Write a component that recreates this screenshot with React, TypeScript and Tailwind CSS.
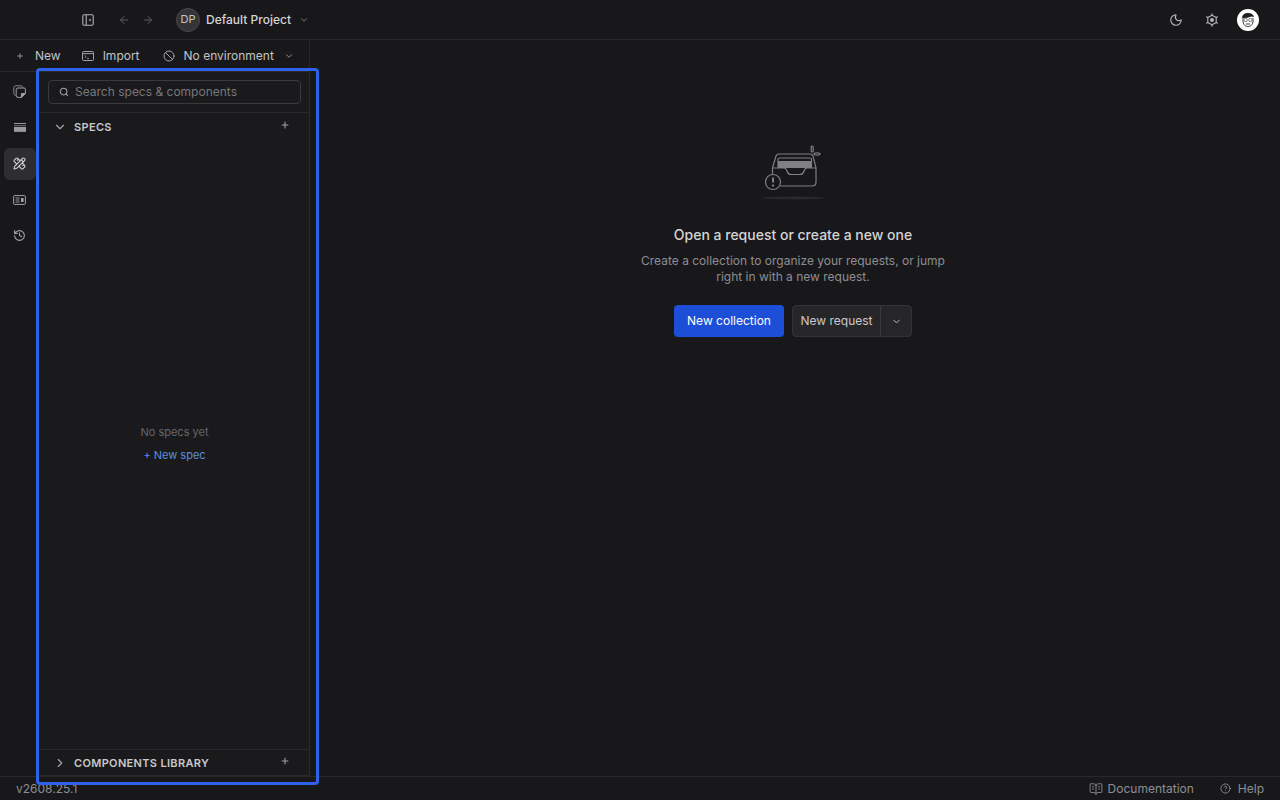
import { ChevronDown, ChevronRight, ArrowLeft, ArrowRight, Plus, Search, Moon, Ban, History, CircleHelp, BookOpenText, PencilRuler } from "lucide-react";

function RailItem({ active, children }: { active?: boolean; children: React.ReactNode }) {
  return (
    <div className={`flex h-8 w-8 items-center justify-center rounded-md text-[#a3a3a3] ${active ? "bg-[#2e2e30] text-[#d4d4d4]" : ""}`}>
      <div className="-ml-px -mt-px flex">{children}</div>
    </div>
  );
}

function SectionHead({ label, open }: { label: string; open?: boolean }) {
  return (
    <div className={`flex items-center pl-[13px] pr-[19px] ${open ? "mt-px h-[27px]" : "h-[25px] pt-px"}`}>
      {open ? <ChevronDown size={14} className="-mt-[2px] text-[#a3a3a3]" /> : <ChevronRight size={14} className="text-[#a3a3a3]" />}
      <span className="ml-[7px] flex-1 text-[11px] font-semibold tracking-[0.03em] text-[#c9c9c9]">{label}</span>
      <Plus size={10} strokeWidth={2.5} className={`text-[#a3a3a3] ${open ? "-mt-[6px]" : "-mt-1"}`} />
    </div>
  );
}

function FilesIcon() {
  return (
    <svg width="13" height="13" viewBox="0 0 13 13" fill="none" stroke="currentColor" strokeWidth="1">
      <path d="M2.6 10.5 Q0.8 10 0.8 8.4 V2.8 Q0.8 0.8 2.8 0.8 H8 Q9.6 0.8 10 2.4" stroke="#858589" />
      <path d="M12.4 8.4 V4.4 Q12.4 3 11 3 H5 Q3.2 3 3.2 4.8 V10.4 Q3.2 12.4 5 12.4 H8.4 Z" />
      <path d="M8.4 12.4 V8.6 H12.4 Z" fill="currentColor" />
    </svg>
  );
}

function StackIcon() {
  return (
    <svg width="12" height="9" viewBox="0 0 12 9">
      <rect x="0" y="0" width="12" height="1" fill="#9a9a9e" />
      <rect x="0" y="2.2" width="12" height="1" fill="#77777b" />
      <rect x="0" y="4" width="12" height="4" fill="#9a9a9e" />
      <rect x="0" y="8" width="12" height="1" fill="#8a8a8e" />
    </svg>
  );
}

function SpecCardIcon() {
  return (
    <svg width="13" height="10" viewBox="0 0 13 10" fill="none" stroke="currentColor">
      <rect x="0.6" y="0.6" width="11.8" height="8.8" rx="1" strokeWidth="1" />
      <path d="M2.5 3 H6.5 M2.5 5 H6.5 M2.5 7 H6.5" strokeWidth="0.9" />
      <rect x="8" y="3" width="2.6" height="4" fill="currentColor" stroke="none" />
    </svg>
  );
}

function ImportIcon() {
  return (
    <svg width="12" height="10" viewBox="0 0 12 10" fill="none" stroke="#a3a3a3" strokeWidth="1">
      <rect x="0.5" y="0.5" width="11" height="9" rx="1" />
      <path d="M0.5 2.6 H11.5" />
      <path d="M2.6 4.4 L4.2 5.6 L2.6 6.8 M5 7.4 H7" strokeWidth="0.8" />
    </svg>
  );
}

function SidebarToggleIcon() {
  return (
    <svg width="12" height="12" viewBox="0 0 12 12" fill="none" stroke="#b0b0b0" strokeWidth="1.1">
      <rect x="0.8" y="0.8" width="10.4" height="10.4" rx="1.2" />
      <path d="M4.2 0.8 V11.2" />
      <path d="M8.6 4.4 V7.6 L6.6 6 Z" fill="#b0b0b0" stroke="none" />
    </svg>
  );
}

function GearIcon() {
  return (
    <svg width="14" height="14" viewBox="0 0 14 14" fill="none" stroke="#b5b5b5" strokeWidth="1.1" strokeLinejoin="round" strokeLinecap="round">
      <path d="M7 2.2 L11.2 4.6 V9.4 L7 11.8 L2.8 9.4 V4.6 Z" />
      <path d="M7 0.8 V2.2 M12.5 3.8 L11.2 4.6 M12.5 10.2 L11.2 9.4 M7 13.2 V11.8 M1.5 10.2 L2.8 9.4 M1.5 3.8 L2.8 4.6" />
      <circle cx="7" cy="7" r="2" fill="#b5b5b5" stroke="none" />
    </svg>
  );
}

function EmptyArt() {
  return (
    <svg width="66" height="56" viewBox="0 0 66 56" fill="none" stroke="#7f7f84" strokeWidth="1.2">
      <path d="M12.5 23 L16 11 Q16.6 9 19 9 H50 Q52.4 9 53 11 L56 23 V37 Q56 41 52 41 H20" />
      <path d="M12.5 23 V29" />
      <path d="M18 23 V14.5 Q18 13 19.5 13 H50 Q51.5 13 51.5 14.5 V23" />
      <rect x="18" y="16" width="33.5" height="7" fill="#7f7f84" stroke="none" />
      <path d="M12.5 23 H24 Q26 23 27 26 Q28 29.5 31 29.5 H40 Q43 29.5 44 26 Q45 23 47 23 H56" />
      <circle cx="13" cy="37" r="7.5" fill="#18181b" />
      <path d="M13 32.5 V37.5" strokeWidth="2" />
      <path d="M13 39.6 V41.4" strokeWidth="2" />
      <rect x="51.2" y="1" width="2" height="6" rx="1" />
      <ellipse cx="57" cy="9" rx="3" ry="1.1" />
      <ellipse cx="33" cy="53" rx="32" ry="1.4" fill="#29292c" stroke="none" />
    </svg>
  );
}

function Avatar() {
  return (
    <svg width="22" height="22" viewBox="0 0 22 22">
      <circle cx="11" cy="11" r="11" fill="#fff" />
      <path d="M5 9 Q5.5 4 11 4 Q16 4 17 8 L14 7.5 Q10 9.5 5 9Z" fill="#1f1f1f" />
      <path d="M6 9 V13 Q7 17.5 11 17.5 Q15 17.5 16 13 V9" fill="none" stroke="#444" strokeWidth="1" />
      <circle cx="8.6" cy="11" r="1.7" fill="none" stroke="#555" strokeWidth="0.8" />
      <circle cx="13.4" cy="11" r="1.7" fill="none" stroke="#555" strokeWidth="0.8" />
      <path d="M9 15 H13" stroke="#444" strokeWidth="1" />
    </svg>
  );
}

export default function App() {
  return (
    <div className="relative flex h-[800px] w-[1280px] flex-col overflow-hidden bg-[#18181b] font-['Inter',sans-serif] text-[#d4d4d4]">
      <header className="flex h-10 shrink-0 items-center border-b border-[#29292c] pl-[82px] pr-[21px]">
        <SidebarToggleIcon />
        <ArrowLeft size={12} className="ml-[24px] text-[#5f5f63]" />
        <ArrowRight size={12} className="ml-[12px] text-[#5f5f63]" />
        <div className="ml-[22px] flex h-6 w-6 items-center justify-center rounded-full border border-[#4a4a4d] bg-[#343437] text-[11px] text-[#c4c4c4]">DP</div>
        <span className="ml-[6px] text-[12px] font-medium text-[#d4d4d4]">Default Project</span>
        <ChevronDown size={10} className="ml-[8px] text-[#8a8a8e]" />
        <div className="flex-1" />
        <Moon size={14} className="text-[#b5b5b5]" />
        <div className="ml-[22px]"><GearIcon /></div>
        <div className="ml-[18px]"><Avatar /></div>
      </header>

      <div className="flex min-h-0 flex-1">
        <div className="flex w-[310px] shrink-0 flex-col border-r border-[#29292c]">
          <div className="flex h-8 shrink-0 items-center border-b border-[#29292c] pl-4 text-[12px] text-[#c4c4c4]">
            <Plus size={8} strokeWidth={2.5} className="text-[#a3a3a3]" />
            <span className="ml-[11px]">New</span>
            <div className="ml-[21px]"><ImportIcon /></div>
            <span className="ml-[9px]">Import</span>
            <Ban size={12} className="ml-[23px] text-[#a3a3a3]" />
            <span className="ml-[9px]">No environment</span>
            <ChevronDown size={10} className="ml-[10px] text-[#a3a3a3]" />
          </div>
          <div className="flex min-h-0 flex-1">
            <nav className="flex w-10 shrink-0 flex-col items-start gap-1 pl-1 pt-1">
              <RailItem><FilesIcon /></RailItem>
              <RailItem><StackIcon /></RailItem>
              <RailItem active><PencilRuler size={13} /></RailItem>
              <RailItem><SpecCardIcon /></RailItem>
              <RailItem><History size={13} /></RailItem>
            </nav>
            <aside className="flex min-w-0 flex-1 flex-col bg-[#1a1a1d]">
              <div className="h-[41px] shrink-0 border-b border-[#29292c] px-2 pt-2">
                <div className="flex h-6 items-center rounded border border-[#3a3a3d] pl-[10px] text-[12px] text-[#77777b]">
                  <Search size={10} strokeWidth={2.5} className="text-[#a3a3a3]" />
                  <span className="ml-[6px]">Search specs &amp; components</span>
                </div>
              </div>
              <SectionHead label="SPECS" open />
              <div className="flex flex-1 flex-col items-center justify-center pb-[3px]">
                <span className="text-[11px] text-[#66666a]">No specs yet</span>
                <span className="mt-[7px] text-[11px] text-[#5d8fd8]">+ New spec</span>
              </div>
              <div className="border-y border-[#29292c]">
                <SectionHead label="COMPONENTS LIBRARY" />
              </div>
            </aside>
          </div>
        </div>

        <main className="flex flex-1 flex-col items-center pr-[4px] pt-[105px]">
          <EmptyArt />
          <h2 className="mt-[24px] text-[14px] font-medium leading-[20px] text-[#d4d4d4]">Open a request or create a new one</h2>
          <p className="mt-[8px] w-[320px] text-center text-[12px] leading-[16px] text-[#8e8e92]">Create a collection to organize your requests, or jump right in with a new request.</p>
          <div className="mt-[20px] flex gap-2 text-[12px]">
            <button className="h-8 w-[110px] rounded bg-[#1d4ed8] text-white">New collection</button>
            <div className="flex h-8 items-center rounded border border-[#333336] bg-[#262628] text-[#c9c9c9]">
              <span className="flex h-full w-[88px] items-center justify-center border-r border-[#3a3a3d]">New request</span>
              <span className="flex w-[30px] justify-center"><ChevronDown size={11} /></span>
            </div>
          </div>
        </main>
      </div>

      <footer className="flex h-6 shrink-0 items-center border-t border-[#29292c] pl-4 pr-4 text-[12px] text-[#8e8e92]">
        <span>v2608.25.1</span>
        <div className="flex-1" />
        <BookOpenText size={14} strokeWidth={1.5} />
        <span className="ml-[5px]">Documentation</span>
        <CircleHelp size={11} className="ml-[26px]" />
        <span className="ml-[7px]">Help</span>
      </footer>

      {/* selection highlight drawn over the sidebar */}
      <div className="pointer-events-none absolute left-[36px] top-[68px] h-[717px] w-[283px] rounded border-[3px] border-[#2f62ea]" />
    </div>
  );
}
